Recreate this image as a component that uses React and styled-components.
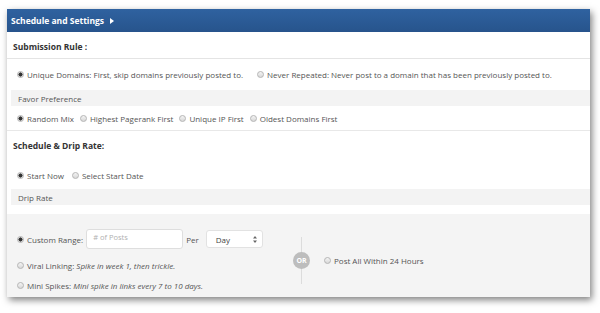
import React from 'react';
import styled, { createGlobalStyle } from 'styled-components';

const Global = createGlobalStyle`
  body {
    margin: 0;
    background: #fff;
    font-family: "Open Sans", "DejaVu Sans", sans-serif;
    color: #444;
  }
`;

const Page = styled.div`
  width: 600px;
  height: 313px;
  padding: 9px 0 0 7px;
  box-sizing: border-box;
`;

const Panel = styled.div`
  width: 583px;
  height: 288px;
  background: #fff;
  box-shadow: 2px 3px 7px rgba(0, 0, 0, 0.5);
  display: flex;
  flex-direction: column;
  overflow: hidden;
`;

const Header = styled.div`
  height: 23px;
  flex: none;
  background: linear-gradient(#2f62a0, #27548c);
  color: #fff;
  font-size: 8.5px;
  font-weight: 700;
  display: flex;
  align-items: center;
  padding-left: 4px;
  gap: 6px;
`;

const Arrow = styled.span`
  width: 0;
  height: 0;
  border-top: 3.5px solid transparent;
  border-bottom: 3.5px solid transparent;
  border-left: 4px solid #fff;
`;

const SectionTitle = styled.div`
  height: ${p => p.h || 27}px;
  flex: none;
  display: flex;
  align-items: center;
  padding: ${p => p.pt || 0}px 0 0 6px;
  font-size: 8.5px;
  font-weight: 700;
  color: #333;
  border-bottom: ${p => (p.line ? '1px solid #e4e4e4' : 'none')};
  box-sizing: border-box;
`;

const Row = styled.div`
  height: ${p => p.h}px;
  flex: none;
  display: flex;
  align-items: center;
  padding: ${p => p.pt || 0}px 0 0 10px;
  gap: ${p => p.gap || 8}px;
  font-size: 8px;
  color: #555;
  border-bottom: ${p => (p.line ? '1px solid #e8e8e8' : 'none')};
  box-sizing: border-box;
`;

const Bar = styled.div`
  height: 16px;
  flex: none;
  margin-left: 4px;
  background: #f3f3f3;
  display: flex;
  align-items: center;
  padding-left: 7px;
  font-size: 8px;
  color: #555;
`;

const Option = styled.label`
  display: flex;
  align-items: center;
  gap: 2px;
  white-space: nowrap;
  em {
    font-style: italic;
  }
`;

const Dot = styled.span`
  width: 7px;
  height: 7px;
  border-radius: 50%;
  border: 1px solid #b5b5b5;
  background: ${p =>
    p.on
      ? 'radial-gradient(circle, #333 0 1.8px, #e6e6e6 2.3px)'
      : 'linear-gradient(#f4f4f4, #d8d8d8)'};
  box-sizing: border-box;
  flex: none;
  margin-right: 1px;
`;

const Drip = styled.div`
  margin-top: 9px;
  flex: 1;
  background: #f4f4f4;
  display: flex;
  align-items: flex-start;
`;

const Left = styled.div`
  width: 294px;
  box-sizing: border-box;
  padding: 10px 0 0 10px;
  display: flex;
  flex-direction: column;
`;

const Divider = styled.div`
  position: relative;
  width: 1px;
  height: 47px;
  margin-top: 23px;
  background: #dcdcdc;
  display: flex;
  align-items: center;
  justify-content: center;
`;

const Or = styled.span`
  position: absolute;
  width: 17px;
  height: 17px;
  border-radius: 50%;
  background: #bdbdbd;
  color: #fff;
  font-size: 7px;
  font-weight: 700;
  display: flex;
  align-items: center;
  justify-content: center;
`;

const Right = styled.div`
  padding: 41px 0 0 22px;
  font-size: 8px;
  color: #555;
`;

const DripLine = styled.div`
  height: ${p => p.h}px;
  display: flex;
  align-items: center;
  font-size: 8px;
  color: #555;
`;

const Input = styled.div`
  width: 97px;
  height: 20px;
  margin-left: 3px;
  border: 1px solid #dedede;
  border-radius: 3px;
  background: #fff;
  box-sizing: border-box;
  padding: 2px 0 0 6px;
  font-size: 7.5px;
  color: #b0b0b0;
`;

const Per = styled.span`
  margin: 0 7px 0 3px;
`;

const Select = styled.div`
  width: 57px;
  height: 18px;
  border: 1px solid #e2e2e2;
  border-radius: 3px;
  background: #fff;
  box-sizing: border-box;
  display: flex;
  align-items: center;
  justify-content: space-between;
  padding: 0 5px 0 9px;
  font-size: 8px;
  color: #444;
`;

const Radio = ({ on, children }) => (
  <Option>
    <Dot on={on ? 1 : 0} />
    <span>{children}</span>
  </Option>
);

const Caret = () => (
  <svg width="4" height="7" viewBox="0 0 4 7">
    <path d="M2 0 L4 2.6 H0 Z M2 7 L4 4.4 H0 Z" fill="#666" />
  </svg>
);

export default function App() {
  return (
    <Page>
      <Global />
      <Panel>
        <Header>
          Schedule and Settings <Arrow />
        </Header>
        <SectionTitle line pt={2}>Submission Rule :</SectionTitle>
        <Row h={31} gap={14}>
          <Radio on>Unique Domains: First, skip domains previously posted to.</Radio>
          <Radio>Never Repeated: Never post to a domain that has been previously posted to.</Radio>
        </Row>
        <Bar>Favor Preference</Bar>
        <Row h={25} gap={6} line pt={1}>
          <Radio on>Random Mix</Radio>
          <Radio>Highest Pagerank First</Radio>
          <Radio>Unique IP First</Radio>
          <Radio>Oldest Domains First</Radio>
        </Row>
        <SectionTitle h={27} pt={1}>Schedule &amp; Drip Rate:</SectionTitle>
        <Row h={31} gap={8} pt={3}>
          <Radio on>Start Now</Radio>
          <Radio>Select Start Date</Radio>
        </Row>
        <Bar>Drip Rate</Bar>
        <Drip>
          <Left>
            <DripLine h={30}>
              <Radio on>Custom Range:</Radio>
              <Input># of Posts</Input>
              <Per>Per</Per>
              <Select>
                Day
                <Caret />
              </Select>
            </DripLine>
            <DripLine h={22}>
              <Radio>
                Viral Linking: <em>Spike in week 1, then trickle.</em>
              </Radio>
            </DripLine>
            <DripLine h={18}>
              <Radio>
                Mini Spikes: <em>Mini spike in links every 7 to 10 days.</em>
              </Radio>
            </DripLine>
          </Left>
          <Divider>
            <Or>OR</Or>
          </Divider>
          <Right>
            <Radio>Post All Within 24 Hours</Radio>
          </Right>
        </Drip>
      </Panel>
    </Page>
  );
}
